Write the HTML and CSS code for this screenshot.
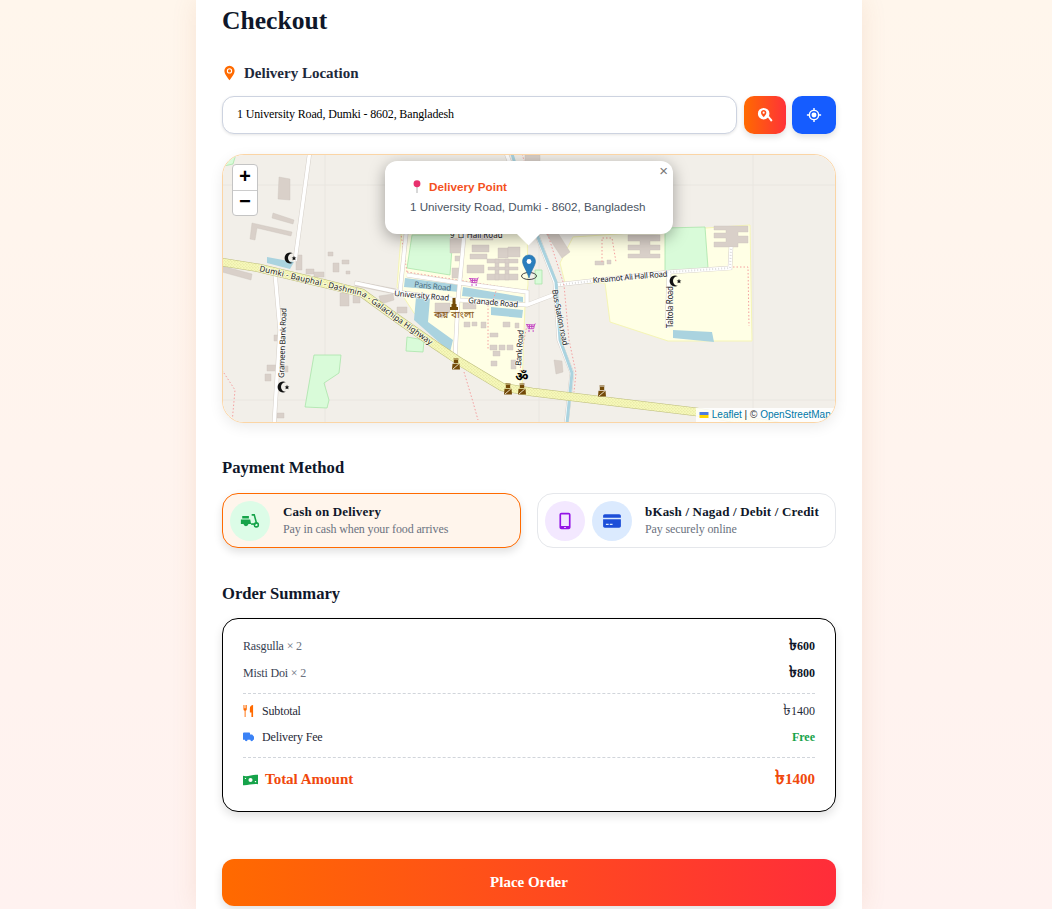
FILE: index.html
```html
<!DOCTYPE html>
<html lang="en">
<head>
    <meta charset="UTF-8">
    <meta name="viewport" content="width=device-width, initial-scale=1.0">
    <title>Checkout</title>
    <link rel="stylesheet" href="styles.css">
</head>
<body>
    <main class="checkout">
        <h1 class="page-title">Checkout</h1>

        <h2 class="location-label">
            <svg class="label-pin" viewBox="0 0 12 16"><path fill-rule="evenodd" d="M6 0a5.600 5.600 0 0 0-5.600 5.600C.4 9.600 4.500 13.600 6 16c1.500-2.400 5.600-6.400 5.600-10.400A5.600 5.600 0 0 0 6 0zm0 2.800a2.900 2.900 0 1 1 0 5.800 2.900 2.900 0 0 1 0-5.800zm0 1.200a1.700 1.700 0 1 0 0 3.400 1.700 1.700 0 0 0 0-3.400z"/></svg>
            Delivery Location
        </h2>
        <div class="address-row">
            <input class="address-input" type="text" value="1 University Road, Dumki - 8602, Bangladesh">
            <button class="icon-btn search-btn" aria-label="Search address">
                <svg viewBox="0 0 18 18" class="btn-icon"><path fill-rule="evenodd" d="M7.500 1a6.500 6.500 0 1 1 0 13 6.500 6.500 0 0 1 0-13zm0 2.500C5.800 3.500 4.500 4.800 4.500 6.400c0 1.800 1.800 3.500 3 5 1.200-1.500 3-3.200 3-5 0-1.600-1.300-2.900-3-2.900zm0 1.700a1.200 1.200 0 1 1 0 2.400 1.200 1.200 0 0 1 0-2.400z"/><path d="M11.800 11.200l1.400-1.400 4.300 5.200-1.700 1.700z"/></svg>
            </button>
            <button class="icon-btn locate-btn" aria-label="Use my location">
                <svg viewBox="0 0 18 18" class="btn-icon"><path fill-rule="evenodd" d="M8.200 1h1.600v2.100a6 6 0 0 1 5.100 5.100H17v1.600h-2.100a6 6 0 0 1-5.100 5.100V17H8.200v-2.100a6 6 0 0 1-5.100-5.100H1V8.200h2.100a6 6 0 0 1 5.100-5.100zM9 4.600a4.400 4.400 0 1 0 0 8.800 4.400 4.400 0 0 0 0-8.800z"/><circle cx="9" cy="9" r="2.800"/></svg>
            </button>
        </div>

        <div class="map">
            <svg class="map-tiles" viewBox="222 154 614 269">
                <defs>
                    <pattern id="speckle" width="3" height="3" patternUnits="userSpaceOnUse">
                        <rect width="3" height="3" fill="#f6f8b9"/>
                        <rect x="0.5" y="0.5" width="0.8" height="0.8" fill="#cfcf86"/>
                        <rect x="2" y="2" width="0.7" height="0.7" fill="#dcdc9c"/>
                    </pattern>
                    <g id="moon"><path class="ico-dark" d="M2.800-4.800A5.500 5.500 0 1 0 2.800 4.800 4 4 0 1 1 2.800-4.800z"/><path class="ico-dark" d="M4-2.200l.7 1.600 1.700.1-1.300 1.100.4 1.700-1.500-.9-1.500.9.400-1.700-1.300-1.100 1.700-.1z"/></g>
                    <g id="guard"><path class="ico-brown" d="M-2.500-5.500h5v1h-5zM-2.200-4h4.400v3h-4.400zM-4 5.500l.5-5.800h7l.5 5.800z"/><path class="ico-stripe" d="M-3.200 5.200L2.800 0"/></g>
                    <g id="cart"><path class="ico-cart" d="M-5-3.500l8.500.5.800-1.500M-3.500-3.300l.8 4h5.400l.8-4M-1.500-3.300v4M.8-3.200v3.900M-3.200-1.500h6.200"/><circle class="ico-cart-dot" cx="-2" cy="3" r=".8"/><circle class="ico-cart-dot" cx="2.200" cy="3" r=".8"/></g>
                    <g id="roads">
                        <path d="M310 150L295 261"/>
                        <path d="M275 273L280 330 274 426"/>
                        <path d="M355 283L397 292 432 297 460 300 527 305 553 295"/>
                        <path d="M407 225L400 292"/>
                        <path d="M465 225L458 300 455 358"/>
                        <path d="M407 275L460 283 527 292 527 305"/>
                        <path d="M505 150L537 235 555 282 559 340 572 373 566 426"/>
                        <path d="M555 285L670 272 730 268 731 247"/>
                        <path d="M669 272L667 328"/>
                    </g>
                    <path id="highway" d="M215 261L259 268 322 283 362 293 395 317 435 345 462 363 502 387 532 392 697 412 790 428"/>
                    <path id="highway-text" d="M259 271L322 286 362 296 395 320 437 350"/>
                </defs>

                <rect class="land" x="222" y="154" width="614" height="269"/>
                <path class="tile-line" d="M325 154V423M539 154V423M753 154V423M222 185H836M222 400H836"/>

                <path class="campus" d="M402 224L397 287 414 313 455 355 505 388 522 388 525 305 528 285 527 224z"/>
                <path class="campus" d="M573 237L560 263 565 283 605 283 610 322 668 341 752 341 750 225z"/>

                <path class="green" d="M222 154H236L233 164 224 166z"/>
                <path class="green" d="M412 235H453L450 275 407 268z"/>
                <path class="green" d="M665 228L705 227 708 268 665 273z"/>
                <path class="green" d="M314 355H341L339 373 324 383 329 400 327 408 305 407z"/>
                <path class="green" d="M535 270H542V284H535z"/>
                <path class="green" d="M407 337L424 340 423 352 406 351z"/>

                <path class="water" d="M267 257L294 262 290 269 267 263z"/>
                <path class="water" d="M405 278L460 285 460 292 404 287z"/>
                <path class="water" d="M463 287L523 297 523 302 462 296z"/>
                <path class="water" d="M491 307L523 310 522 318 491 315z"/>
                <path class="water" d="M416 297L430 298 428 322 453 340 450 352 414 320z"/>
                <path class="water" d="M673 330L712 332 714 342 673 338z"/>

                <g class="buildings">
                    <path d="M279 177L290 179 290 200 278 199z"/>
                    <path d="M273 213L294 220 293 224 272 218z"/>
                    <path d="M252 223L292 232 291 236 257 228 255 240 250 239z"/>
                    <path d="M222 266L252 274 251 280 222 272z"/>
                    <path d="M296 255H302V270H296z"/>
                    <path d="M328 252H333V256H328z"/>
                    <path d="M333 263H339V272H333z"/>
                    <path d="M342 260H349V264H342z"/>
                    <path d="M346 271H350V274H346z"/>
                    <path d="M306 269H314V274H306z"/>
                    <path d="M314 272H324V277H314z"/>
                    <path d="M340 293H349V306H340z"/>
                    <path d="M353 295H360V303H353z"/>
                    <path d="M355 281L396 289 395 294 355 286z"/>
                    <path d="M379 296L393 294 394 300 381 304z"/>
                    <path d="M397 307H407V313H397z"/>
                    <path d="M274 335H280V341H274z"/>
                    <path d="M267 365H279V371H267z"/>
                    <path d="M284 366H288V372H284z"/>
                    <path d="M265 374H271V381H265z"/>
                    <path d="M277 413H284V418H277z"/>
                    <path d="M554 360L562 361 563 372 556 374z"/>
                    <path d="M525 155H540V165H525z"/>
                    <path d="M545 232L556 230 570 252 562 258z"/>
                    <path d="M450 238H463V253H450z"/>
                    <path d="M455 256H460V261H455z"/>
                    <path d="M452 268H462V278H452z"/>
                    <path d="M470 235H493V240H470z"/>
                    <path d="M472 245H489V252H472z"/>
                    <path d="M470 254H487V259H470z"/>
                    <path d="M467 265H484V273H467z"/>
                    <path d="M498 248H508V258H498z"/>
                    <path d="M508 247H520V257H508z"/>
                    <path d="M487 259H518V263H487zM488 267H518V270H488zM487 274H518V280H487zM495 259H499V280H495zM505 259H509V280H505z"/>
                    <path d="M435 303H450V312L442 318 435 316z"/>
                    <path d="M463 303H476V309H463z"/>
                    <path d="M464 322H470V327H464zM472 322H477V326H472zM481 322H486V328H481zM503 322H510V327H503zM515 323H519V328H515z"/>
                    <path d="M490 333H498V337H490zM490 345H497V350H490zM499 345H505V350H499zM507 345H513V350H507z"/>
                    <path d="M491 361H497V366H491zM493 351H500V356H493zM511 360H516V369H511z"/>
                    <path d="M714 226H748V232H738V236H748V243H738V247H714V242H726V238H714V233H726V230H714z"/>
                    <path d="M628 235H660V241H650V245H660V250H650V254H660V258H628V254H640V250H628V245H640V241H628z"/>
                    <path d="M595 261H604V265H595zM607 260H611V264H607z"/>
                </g>

                <path class="boundary" d="M407 272L527 291M407 272L400 228M497 288L493 300M488 305V350M527 325L522 350 520 372M602 262L602 238H612L616 262M733 267H748L749 326M222 370L235 390 232 423M464 372L473 402 478 420"/>
                <use href="#roads" class="road-casing"/>
                <use href="#roads" class="road-fill"/>
                <path class="path-dots" d="M557 285L670 272 730 268 731 247"/>
                <path class="stream" d="M512 154L537 235 556 282 560 340 572 373 567 423"/>
                <path class="boundary" d="M522 154L548 235 564 285 569 340 576 373 574 392"/>

                <use href="#highway" class="highway-casing"/>
                <use href="#highway" class="highway-fill"/>

                <text class="road-label"><textPath href="#highway-text" textLength="190">Dumki - Bauphal - Dashmina - Galachipa Highway</textPath></text>
                <text class="road-label" textLength="70" transform="translate(284 378) rotate(-88)">Grameen Bank Road</text>
                <text class="road-label" textLength="55" x="394" y="296" transform="rotate(5 394 296)">University Road</text>
                <text class="road-label water-label" textLength="37" x="414" y="287" transform="rotate(6 414 287)">Paris Road</text>
                <text class="road-label" textLength="50" x="468" y="303" transform="rotate(5 468 303)">Granade Road</text>
                <text class="road-label" textLength="75" x="593" y="283" transform="rotate(-5 593 283)">Kreamot Ali Hall Road</text>
                <text class="road-label" textLength="42" transform="translate(673 328) rotate(-90)">Taltola Road</text>
                <text class="road-label" textLength="57" transform="translate(552 290) rotate(79)">Bus Station road</text>
                <text class="road-label" textLength="36" transform="translate(521 366) rotate(-86)">Bank Road</text>
                <text class="road-label" x="450" y="238">9 ロ Hall Road</text>
                <text class="place-label" x="454" y="318">কয় বাংলা</text>
                <text class="om-label" x="522" y="381">ॐ</text>

                <use href="#moon" x="290" y="258"/>
                <use href="#moon" x="283" y="387"/>
                <use href="#moon" x="675" y="281"/>
                <use href="#guard" x="456" y="364"/>
                <use href="#guard" x="508" y="389"/>
                <use href="#guard" x="522" y="389"/>
                <use href="#guard" x="602" y="391"/>
                <use href="#cart" x="474" y="282"/>
                <use href="#cart" x="531" y="328"/>
                <path class="ico-brown" d="M452.500 298h3v6h1v3h1.500v3h-8v-3h1.500v-3h1z"/>

                <ellipse class="marker-shadow" cx="529" cy="276" rx="7.500" ry="3.500"/>
                <path class="marker" d="M529 255c-3.800 0-6.500 2.900-6.500 6.500 0 3.800 4.800 10 6.500 16.500 1.700-6.500 6.500-12.700 6.500-16.500 0-3.600-2.700-6.500-6.500-6.500z"/>
                <circle class="marker-hole" cx="529" cy="261.500" r="2.400"/>
            </svg>

            <div class="zoom-control">
                <span class="zoom-btn">+</span>
                <span class="zoom-btn">−</span>
            </div>

            <div class="popup">
                <span class="popup-close">×</span>
                <p class="popup-title">
                    <svg class="popup-pin" viewBox="0 0 10 14"><line x1="5" y1="6" x2="5" y2="14"/><circle cx="5" cy="4" r="3.700"/></svg>
                    Delivery Point
                </p>
                <p class="popup-address">1 University Road, Dumki - 8602, Bangladesh</p>
                <div class="popup-tip"></div>
            </div>

            <div class="attribution">
                <svg class="flag" viewBox="0 0 12 8"><rect width="12" height="4" fill="#4C7BE1"/><rect y="4" width="12" height="4" fill="#FFD500"/></svg>
                <a>Leaflet</a> | © <a>OpenStreetMap</a>
            </div>
        </div>

        <h2 class="section-title payment-title">Payment Method</h2>
        <div class="payment-grid">
            <div class="pay-option selected">
                <span class="pay-icon bg-green">
                    <svg viewBox="0 0 18 18" class="icon-green"><path d="M2 4.500h6v2.300H2zM.8 7.600h8.400l.8 4.200H7.600a2.300 2.300 0 0 1-4.500 0H.8z"/><path class="stroke-green" d="M10.500 3.500h2.300l2.200 8"/><path d="M10 11h4v1.500h-4z"/><circle class="stroke-green" cx="14.700" cy="12.500" r="1.800"/></svg>
                </span>
                <div>
                    <div class="pay-name">Cash on Delivery</div>
                    <div class="pay-sub">Pay in cash when your food arrives</div>
                </div>
            </div>
            <div class="pay-option">
                <span class="pay-icon bg-purple">
                    <svg viewBox="0 0 18 18" class="icon-purple"><path fill-rule="evenodd" d="M5.800 1.500h6.400c1 0 1.800.8 1.800 1.800v11.400c0 1-.8 1.800-1.800 1.800H5.800c-1 0-1.800-.8-1.800-1.800V3.300c0-1 .8-1.800 1.800-1.800zm-.3 1.600v10.400h7V3.100zM8.300 14.300h1.400v1H8.300z"/></svg>
                </span>
                <span class="pay-icon bg-blue">
                    <svg viewBox="0 0 18 18" class="icon-blue"><path fill-rule="evenodd" d="M2.500 3h13c.8 0 1.500.7 1.500 1.500V6H1V4.500C1 3.700 1.700 3 2.500 3zM1 7.500h16v6c0 .8-.7 1.500-1.500 1.500h-13C1.700 15 1 14.300 1 13.500zM3.500 11.500v1H6v-1zm3.500 0v1h2.500v-1z"/></svg>
                </span>
                <div>
                    <div class="pay-name">bKash / Nagad / Debit / Credit</div>
                    <div class="pay-sub">Pay securely online</div>
                </div>
            </div>
        </div>

        <h2 class="section-title summary-title">Order Summary</h2>
        <section class="summary">
            <div class="item-row"><span class="item-name">Rasgulla <span class="item-qty">× 2</span></span><strong><span class="taka">৳</span>600</strong></div>
            <div class="item-row"><span class="item-name">Misti Doi <span class="item-qty">× 2</span></span><strong><span class="taka">৳</span>800</strong></div>
            <div class="fee-block">
                <div class="fee-row">
                    <span class="fee-label">
                        <svg viewBox="0 0 12 13" class="fee-icon icon-orange"><path d="M.5 0h.8v3.500h.6V0h.8v3.500h.6V0h.8v4.200c0 1-.6 1.700-1.300 2V13H1.800V6.200C1.100 5.900.5 5.200.5 4.200zM11 0v13H9.200V8H7.500V3.500C7.500 1.500 9 0 11 0z"/></svg>
                        Subtotal
                    </span>
                    <span><span class="taka">৳</span>1400</span>
                </div>
                <div class="fee-row">
                    <span class="fee-label">
                        <svg viewBox="0 0 12 10" class="fee-icon icon-truck"><path d="M0 1.200C0 .6.400.2 1 .2h5.800c.5 0 .9.400.9 1v1h1.800c.3 0 .5.100.7.300l1.400 1.700c.2.200.4.500.4.800V8H11a1.500 1.500 0 0 1-3 0H5a1.500 1.500 0 0 1-3 0H0z"/></svg>
                        Delivery Fee
                    </span>
                    <strong class="free">Free</strong>
                </div>
            </div>
            <div class="total-row">
                <span class="total-label">
                    <svg viewBox="0 0 16 12" class="total-icon"><path fill-rule="evenodd" d="M0 1.500C5 3 10 0 16 .3v10.200C11 9.500 5 12 0 11.500zM8 3.800a2.200 2.200 0 1 0 0 4.400 2.200 2.200 0 0 0 0-4.400zM2 3.500v1.500h1.500C3.500 4.200 3 3.600 2 3.500zM14 7h-1.500c0 .8.500 1.400 1.500 1.500z"/></svg>
                    Total Amount
                </span>
                <span><span class="taka">৳</span>1400</span>
            </div>
        </section>

        <button class="place-order">Place Order</button>
    </main>
</body>
</html>
```

FILE: styles.css
```css
html, body {
    height: 100%;
    overflow: hidden;
}
body {
    margin: 0;
    background: linear-gradient(180deg, #fff6ec, #fff2f0);
    font-family: "Liberation Serif", serif;
    color: #0f172a;
}
h1, h2, p {
    margin: 0;
}
.checkout {
    box-sizing: border-box;
    width: 666px;
    height: 909px;
    margin-left: 196px;
    padding: 6px 26px 0;
    background: white;
    box-shadow: 0 0 24px rgba(190,110,50,0.12);
}
.page-title {
    font-size: 25.6px;
    line-height: 30px;
}
.location-label {
    display: flex;
    align-items: center;
    gap: 9px;
    margin-top: 28px;
    height: 18px;
    font-size: 15px;
    color: #1e293b;
}
.label-pin {
    width: 11px;
    height: 16px;
    margin-left: 2px;
    fill: #ff6a00;
}
.address-row {
    display: flex;
    gap: 6px;
    margin-top: 14px;
}
.address-input {
    box-sizing: border-box;
    flex: 1;
    min-width: 0;
    height: 38px;
    margin-right: 1px;
    padding: 0 14px 2px;
    border: 1px solid #cdd3e0;
    border-radius: 12px;
    background: white;
    box-shadow: 0 1px 3px rgba(0,0,0,0.1);
    font-family: "Liberation Serif", serif;
    font-size: 12px;
    letter-spacing: -0.15px;
    color: black;
}
.icon-btn {
    display: flex;
    align-items: center;
    justify-content: center;
    height: 38px;
    padding: 0;
    border: none;
    border-radius: 10px;
    box-shadow: 0 3px 6px rgba(0,0,0,0.12);
}
.search-btn {
    width: 42px;
    background: linear-gradient(90deg, #ff6a00, #ff3238);
}
.locate-btn {
    width: 44px;
    background: #155cff;
}
.btn-icon {
    width: 16px;
    height: 16px;
    fill: white;
}
.map {
    position: relative;
    box-sizing: border-box;
    height: 269px;
    margin-top: 20px;
    border: 1px solid #fbd5a5;
    border-radius: 22px;
    overflow: hidden;
    box-shadow: 0 4px 14px rgba(0,0,0,0.08);
}
.map-tiles {
    display: block;
    position: absolute;
    left: -1px;
    top: -1px;
    width: 614px;
    height: 269px;
}
.land { fill: #f2efe9; }
.tile-line { fill: none; stroke: #e9e6e0; stroke-width: 1; }
.campus { fill: #ffffe5; stroke: #f5f5b5; stroke-width: 1; }
.green { fill: #d9fbd9; stroke: #a9e4a9; stroke-width: 0.8; }
.water { fill: #aad3df; }
.buildings { fill: #d9d0c9; stroke: #cbc2ba; stroke-width: 0.4; }
.boundary { fill: none; stroke: #f4a0a0; stroke-width: 1; stroke-dasharray: 1.5 2; }
.road-casing { fill: none; stroke: #d5cfc8; stroke-width: 4.5; }
.road-fill { fill: none; stroke: white; stroke-width: 3.5; }
.path-dots { fill: none; stroke: #dcdcdc; stroke-width: 2; stroke-dasharray: 1 2; }
.stream { fill: none; stroke: #aad3df; stroke-width: 3; }
.highway-casing { fill: none; stroke: #bcbc7c; stroke-width: 8.5; }
.highway-fill { fill: none; stroke: url(#speckle); stroke-width: 7.5; }
.road-label {
    font-family: "Noto Sans", sans-serif;
    font-size: 8px;
    fill: #222;
    stroke: rgba(255,255,255,0.6);
    stroke-width: 1.5px;
    paint-order: stroke;
}
.water-label { fill: #4a6a7a; stroke: none; }
.place-label {
    font-family: "Noto Sans Bengali", "Noto Sans", sans-serif;
    font-size: 10px;
    fill: #8a5a20;
    text-anchor: middle;
}
.om-label {
    font-family: "Noto Sans Devanagari", "DejaVu Sans", sans-serif;
    font-size: 13px;
    font-weight: bold;
    fill: black;
    text-anchor: middle;
}
.ico-dark { fill: #111; }
.ico-brown { fill: #734a08; }
.ico-stripe { stroke: #e8dcc0; stroke-width: 1; }
.ico-cart { fill: none; stroke: #c23fc2; stroke-width: 0.9; }
.ico-cart-dot { fill: #c23fc2; }
.marker { fill: #2a7ebd; stroke: #1f6aa3; stroke-width: 0.5; }
.marker-hole { fill: white; }
.marker-shadow { fill: none; stroke: #444; stroke-width: 1; }

.zoom-control {
    position: absolute;
    left: 9px;
    top: 9px;
    box-sizing: border-box;
    display: flex;
    flex-direction: column;
    width: 26px;
    height: 52px;
    border: 1px solid #c4c4c4;
    border-radius: 4px;
    background: white;
    overflow: hidden;
}
.zoom-btn {
    display: flex;
    align-items: center;
    justify-content: center;
    flex: 1;
    font-family: "Liberation Mono", monospace;
    font-size: 20px;
    font-weight: bold;
    color: black;
}
.zoom-btn:first-child {
    border-bottom: 1px solid #ccc;
}
.popup {
    position: absolute;
    left: 162px;
    top: 6px;
    box-sizing: border-box;
    width: 288px;
    height: 73px;
    padding: 18px 25px 0;
    border-radius: 12px;
    background: white;
    box-shadow: 0 4px 16px rgba(0,0,0,0.35);
    font-family: "Liberation Sans", sans-serif;
}
.popup-close {
    position: absolute;
    top: 2px;
    right: 5px;
    font-size: 15px;
    line-height: 16px;
    color: #777;
}
.popup-title {
    display: flex;
    align-items: center;
    gap: 7px;
    padding-left: 2px;
    font-size: 11.7px;
    font-weight: bold;
    line-height: 15px;
    color: #f4511e;
}
.popup-pin {
    width: 10px;
    height: 13px;
}
.popup-pin circle { fill: #e8316e; }
.popup-pin line { stroke: #b9b9b9; stroke-width: 1.2; }
.popup-address {
    margin-top: 5px;
    font-size: 11.65px;
    line-height: 16px;
    color: #4b5563;
    white-space: nowrap;
}
.popup-tip {
    position: absolute;
    left: 135px;
    bottom: -8px;
    width: 17px;
    height: 17px;
    background: white;
    transform: rotate(45deg);
}
.attribution {
    position: absolute;
    right: 0;
    bottom: 0;
    box-sizing: border-box;
    width: 139px;
    height: 14px;
    padding-left: 3px;
    background: rgba(255,255,255,0.85);
    font-family: "Liberation Sans", sans-serif;
    font-size: 10px;
    line-height: 14px;
    color: #333;
    white-space: nowrap;
    overflow: hidden;
}
.attribution a { color: #0078a8; }
.flag {
    width: 10px;
    height: 6px;
}
.section-title {
    font-size: 16.6px;
    line-height: 20px;
    color: #0f172a;
}
.payment-title {
    margin-top: 35px;
}
.payment-grid {
    display: grid;
    grid-template-columns: 299px 299px;
    gap: 16px;
    margin-top: 15px;
}
.pay-option {
    box-sizing: border-box;
    display: flex;
    align-items: center;
    gap: 7px;
    height: 55px;
    padding: 0 7px;
    border: 1px solid #e5e7eb;
    border-radius: 16px;
    background: white;
}
.pay-option > div {
    margin-left: 6px;
}
.pay-option.selected {
    border-color: #ff6a00;
    background: #fff5ec;
    box-shadow: 0 4px 8px rgba(0,0,0,0.12);
}
.pay-icon {
    display: flex;
    align-items: center;
    justify-content: center;
    width: 40px;
    height: 40px;
    border-radius: 50%;
}
.pay-icon svg {
    width: 20px;
    height: 20px;
}
.bg-green { background: #dcfce7; }
.bg-purple { background: #f3e8ff; }
.bg-blue { background: #dbeafe; }
.icon-green { fill: #16a34a; }
.icon-green .stroke-green { fill: none; stroke: #16a34a; stroke-width: 1.4; }
.icon-purple { fill: #9314e6; }
.icon-blue { fill: #1d4ed8; }
.pay-name {
    font-size: 13px;
    font-weight: bold;
    line-height: 16px;
    letter-spacing: 0.17px;
}
.pay-sub {
    font-size: 12px;
    line-height: 18px;
    letter-spacing: -0.12px;
    color: #6b7280;
}
.summary-title {
    margin-top: 36px;
}
.summary {
    box-sizing: border-box;
    height: 194px;
    margin-top: 14px;
    padding: 14px 20px 0;
    border: 1px solid black;
    border-radius: 16px;
    background: white;
    box-shadow: 0 4px 10px rgba(0,0,0,0.12);
    font-size: 12px;
}
.item-row, .fee-row, .total-row {
    display: flex;
    justify-content: space-between;
    align-items: center;
}
.item-row {
    height: 27px;
}
.item-name, .fee-label {
    letter-spacing: -0.15px;
}
.item-name { color: #374151; }
.item-qty { color: #6b7280; }
.taka {
    font-size: 1.35em;
    line-height: 0;
}
.fee-block {
    margin-top: 6px;
    padding: 4px 0 7px;
    border-top: 1px dashed #d1d5db;
    border-bottom: 1px dashed #d1d5db;
}
.fee-row {
    height: 26px;
    color: #1f2937;
}
.fee-label {
    display: flex;
    align-items: center;
    gap: 8px;
}
.fee-icon {
    width: 11px;
    height: 12px;
}
.icon-orange { fill: #ff6a00; }
.icon-truck { fill: #3b82f6; }
.free { color: #16a34a; }
.total-row {
    height: 43px;
    font-size: 15px;
    font-weight: bold;
    color: #f0480c;
}
.total-label {
    display: flex;
    align-items: center;
    gap: 7px;
}
.total-icon {
    width: 15px;
    height: 12px;
    fill: #16a34a;
}
.place-order {
    display: block;
    width: 100%;
    height: 47px;
    margin-top: 47px;
    border: none;
    border-radius: 12px;
    background: linear-gradient(90deg, #ff6a00, #ff2d3a);
    box-shadow: 0 4px 10px rgba(0,0,0,0.12);
    font-family: "Liberation Serif", serif;
    font-size: 15px;
    font-weight: bold;
    color: white;
}
```
